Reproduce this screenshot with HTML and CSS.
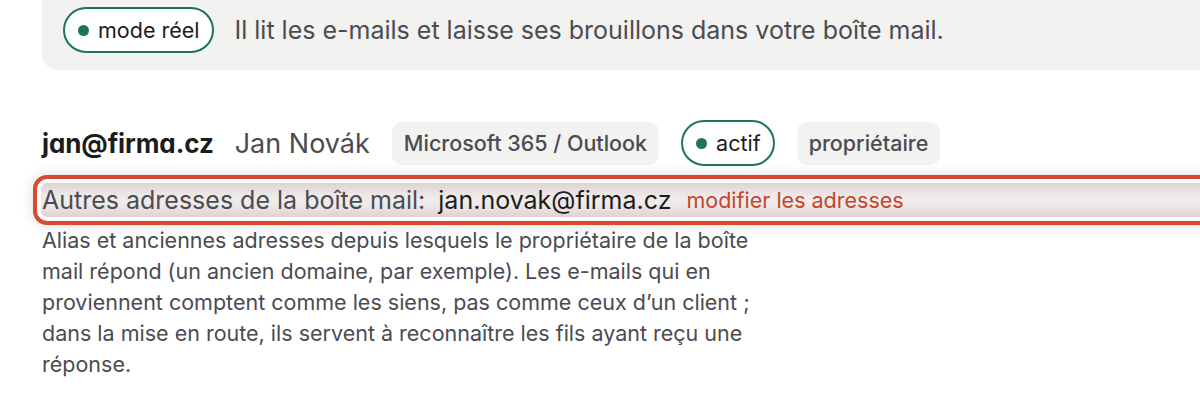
FILE: index.html
```html
<!DOCTYPE html>
<html lang="fr">
<head>
  <meta charset="UTF-8">
  <meta name="viewport" content="width=device-width, initial-scale=1.0">
  <title>Boîte mail</title>
  <link rel="stylesheet" href="styles.css">
</head>
<body>
  <div class="page">
    <div class="mode-card">
      <span class="pill"><span class="dot"></span>mode réel</span>
      <span class="mode-text">Il lit les e-mails et laisse ses brouillons dans votre boîte mail.</span>
    </div>

    <div class="account">
      <span class="account-email">jan@firma.cz</span>
      <span class="account-name">Jan Novák</span>
      <span class="tag">Microsoft 365 / Outlook</span>
      <span class="pill"><span class="dot"></span>actif</span>
      <span class="tag">propriétaire</span>
    </div>

    <div class="addr-row">
      <div class="addr-inner">
        <span class="addr-label">Autres adresses de la boîte mail:</span>
        <span class="addr-value">jan.novak@firma.cz</span>
        <a class="addr-edit" href="#">modifier les adresses</a>
      </div>
    </div>

    <p class="help">Alias et anciennes adresses depuis lesquels le propriétaire de la boîte mail répond (un ancien domaine, par exemple). Les e-mails qui en proviennent comptent comme les siens, pas comme ceux d’un client ; dans la mise en route, ils servent à reconnaître les fils ayant reçu une réponse.</p>
  </div>
</body>
</html>
```

FILE: styles.css
```css
body {
  margin: 0;
  background: #ffffff;
  font-family: Inter, "Noto Sans", sans-serif;
  color: #4b4b52;
  overflow: hidden;
}
.page {
  padding-left: 42px;
}
.mode-card {
  display: flex;
  align-items: center;
  gap: 21px;
  margin-top: -10px;
  margin-right: -20px;
  padding: 17px 21px;
  background: #f2f2f0;
  border-radius: 0 0 0 16px;
}
.pill {
  display: inline-flex;
  align-items: center;
  gap: 9px;
  height: 46px;
  box-sizing: border-box;
  padding: 0 12px 0 13px;
  border: 2px solid #1e7553;
  border-radius: 23px;
  background: #ffffff;
  color: #1c1c1c;
  font-size: 21.5px;
}
.dot {
  flex: none;
  width: 11px;
  height: 11px;
  border-radius: 50%;
  background: #1e7553;
}
.mode-text {
  font-size: 25px;
  color: #4b4b52;
}
.account {
  display: flex;
  align-items: center;
  gap: 22px;
  margin-top: 50px;
}
.account-email {
  font-size: 26px;
  font-weight: 700;
  color: #1c1c1c;
  letter-spacing: -0.1px;
  font-feature-settings: "cv11";
}
.account-name {
  font-size: 27px;
  color: #4b4b52;
  margin-left: -1px;
}
.tag {
  display: inline-flex;
  align-items: center;
  height: 43px;
  padding: 0 12px;
  border-radius: 10px;
  background: #f2f2f0;
  font-size: 21.5px;
  font-weight: 500;
  color: #4b4b52;
}
.addr-row {
  margin: 9px -40px 0 -9px;
  padding: 4px;
  border: 4px solid #d94a2f;
  border-radius: 14px;
  background: #ffffff;
  box-shadow: 0 0 14px rgba(0, 0, 0, 0.14);
}
.addr-inner {
  display: flex;
  align-items: center;
  gap: 13px;
  height: 34px;
  padding-left: 1px;
  border-radius: 6px;
  background: linear-gradient(#e2d2d1, #eeebea 40%, #eeebea 60%, #e2d2d1);
}
.addr-label {
  font-size: 25px;
  color: #4b4b52;
}
.addr-value {
  font-size: 25px;
  color: #1c1c1c;
}
.addr-edit {
  font-size: 21.5px;
  color: #c4452b;
  text-decoration: none;
  margin-left: 2px;
}
.help {
  width: 725px;
  margin: 0;
  font-size: 21.5px;
  line-height: 31px;
  color: #4b4b52;
}
```
